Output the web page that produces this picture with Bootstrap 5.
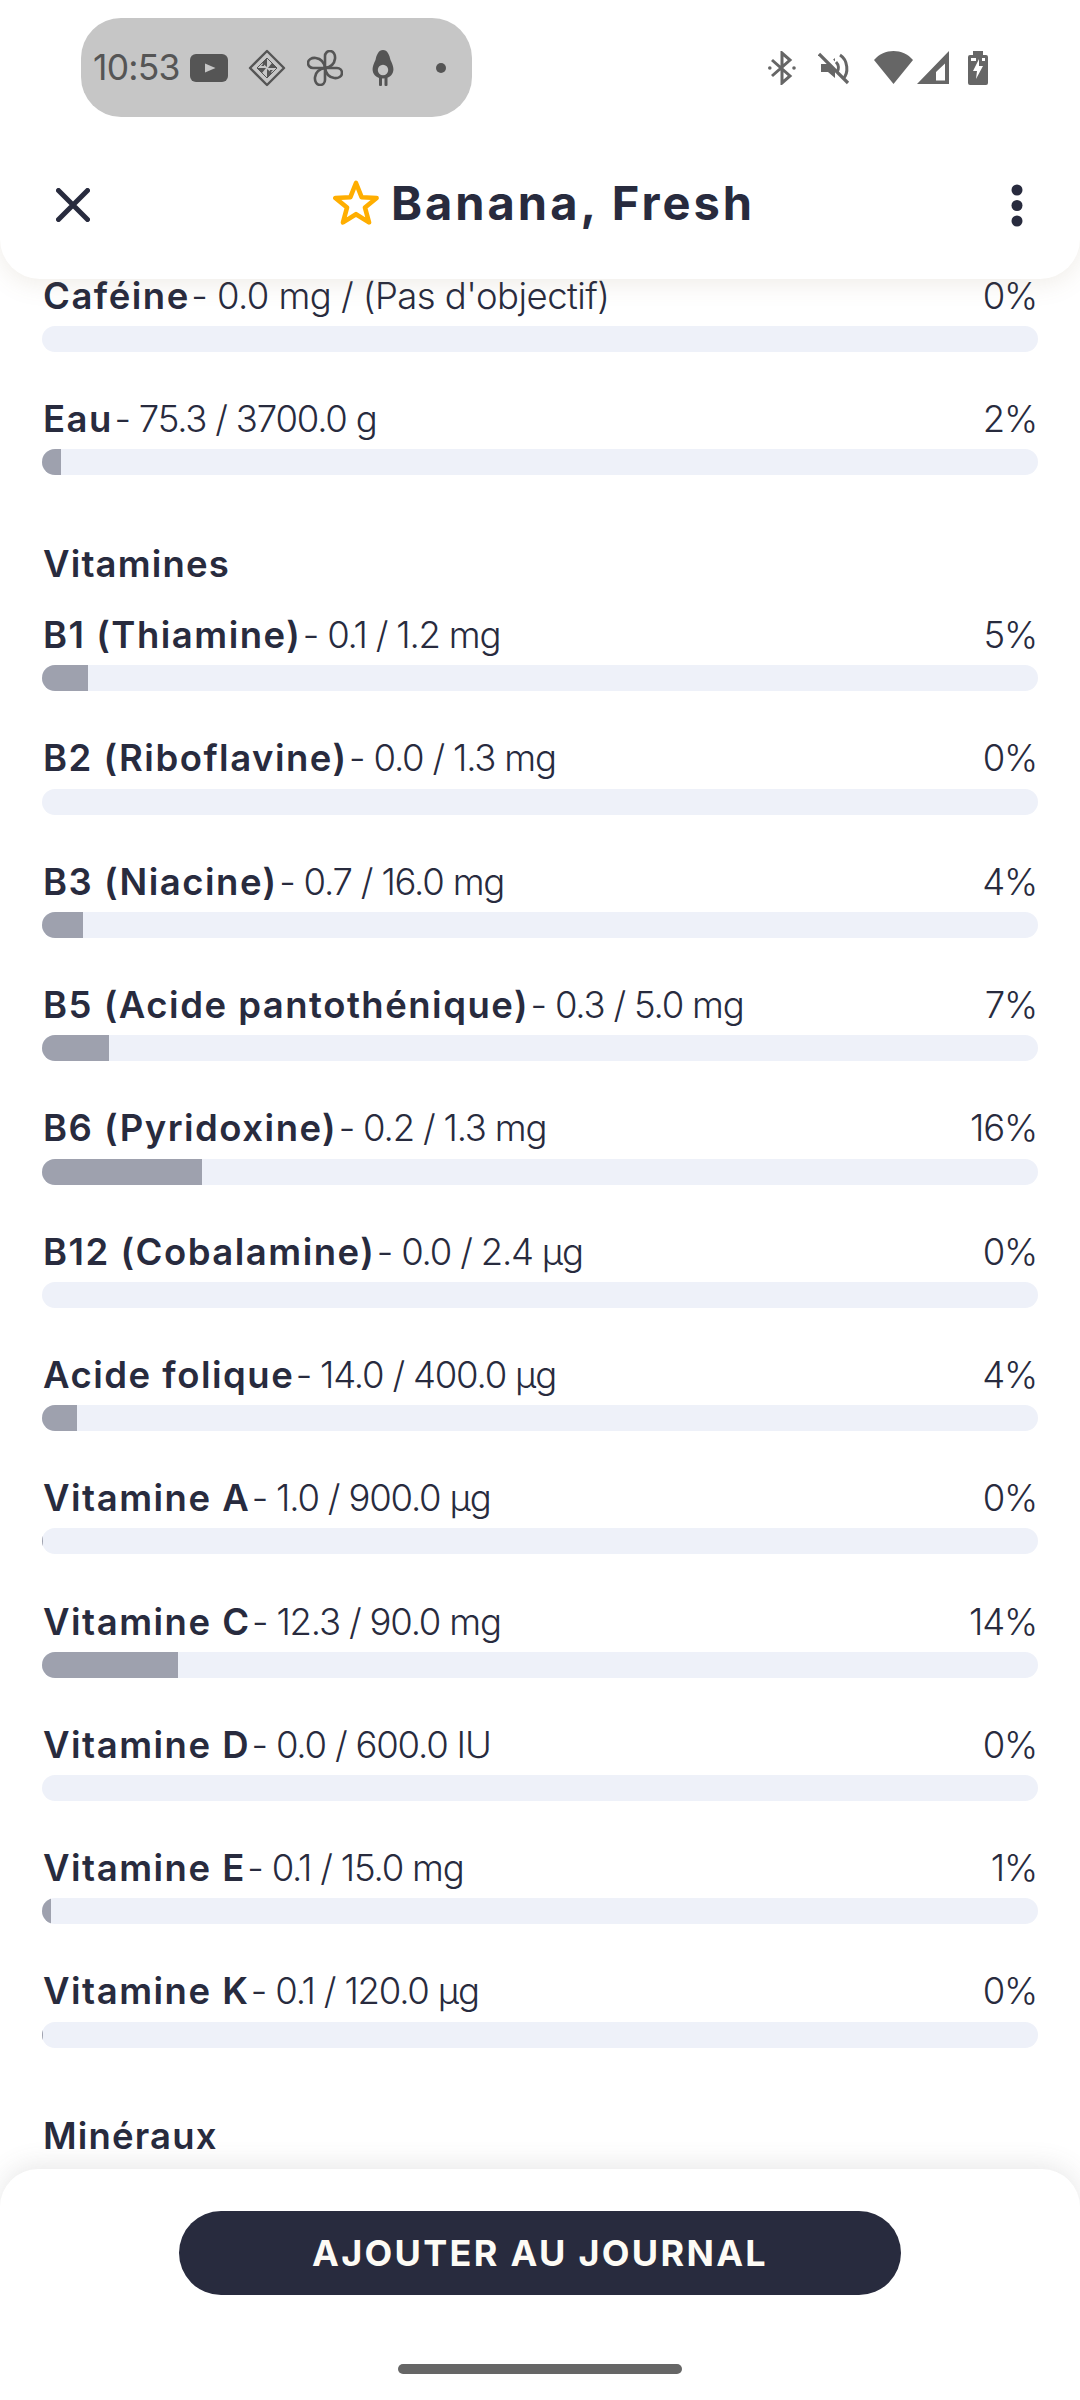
<!doctype html>
<html lang="fr">
<head>
<meta charset="utf-8">
<title>Banana, Fresh</title>
<link href="https://cdn.jsdelivr.net/npm/bootstrap@5.3.0/dist/css/bootstrap.min.css" rel="stylesheet">
<style>
html,body{height:2400px;margin:0;background:#fff;color:#282b3e;font-family:"Inter","Noto Sans",sans-serif;overflow:hidden}
.screen{height:2400px;width:1080px}
.top-sheet{height:279px;background:#fff;border-radius:0 0 40px 40px;box-shadow:0 4px 26px rgba(130,105,70,.13);position:relative;z-index:2;flex:none}
.status-row{height:99px;margin-top:18px;padding:0 92px 0 81px}
.status-pill{width:391px;height:99px;border-radius:40px;background:#c6c6c6;color:#555;padding-left:12px;font-size:35.5px;letter-spacing:-.8px;line-height:1}
.status-pill svg,.status-right svg{display:block;flex:none}
.ic-yt{margin-left:10px}
.ic-dia{margin-left:20px}
.ic-pin{margin-left:21px}
.ic-avo{margin-left:29px}
.ic-dot{margin-left:42px}
.ic-mute{margin-left:22px}
.ic-wifi{margin-left:24px}
.ic-sig{margin-left:4px}
.ic-bat{margin-left:19px}
.ic-star{margin-right:12px}
.title-row{padding:0 57px 0 56px;height:100px;margin-top:38px}
.title-group{margin:0 13px 6px 0}
.sheet-title{font-size:47px;font-weight:700;line-height:1;margin:0;letter-spacing:3px}
.scroll-area{flex:1 1 auto;overflow:hidden;padding:0 42px}
.scroll-inner{margin-top:-5.3px}
.sec-title{font-size:36.5px;font-weight:600;line-height:46px;margin:65.7px 0 26px 1px;letter-spacing:1.15px}
.nut-row{margin-bottom:45.03px}
.nut-line{font-size:36.5px;line-height:45px;font-weight:300;letter-spacing:-1.2px;padding-right:1px}
.nut-wide{letter-spacing:-.55px}
.nut-line b{font-weight:600;letter-spacing:1.5px;margin:0 1.5px 0 1px}
.nut-bar{height:26px;background:#eef1f9;border-radius:13px;margin-top:7.3px}
.nut-bar .progress-bar{background:#9ea1ae}
.bottom-sheet{height:231px;flex:none;background:#fff;border-radius:38px 38px 0 0;box-shadow:0 -4px 26px rgba(90,90,90,.14);position:relative;z-index:2;padding-top:42px}
.add-btn{width:722px;height:84px;background:#282b3e;color:#fdfbf5;font-size:36px;font-weight:700;letter-spacing:2.3px;border:0;line-height:1}
.home-bar{width:284px;height:10px;background:#666;border-radius:5px;margin-top:69px}
</style>
</head>
<body>
<div class="screen d-flex flex-column">
  <header class="top-sheet">
    <div class="status-row d-flex justify-content-between align-items-center">
      <div class="status-pill d-flex align-items-center">
        <span>10:53</span>
        <svg class="ic-yt" width="38" height="28" viewBox="0 0 38 28"><rect width="38" height="28" rx="6" fill="#555"/><path d="M15 9.5l10.5 4.5-10.5 4.5z" fill="#c6c6c6"/></svg>
        <svg class="ic-dia" width="38" height="38" viewBox="0 0 38 38" fill="none" stroke="#555"><path d="M19 2 36 19 19 36 2 19Z" stroke-width="2.4" stroke-linejoin="round"/><path d="M19 9 29 19 19 29 9 19Z" stroke-width="1"/><path d="M19 9 19 18 14 14ZM29 19 20 19 24 14ZM19 29 19 20 24 24ZM9 19 18 19 14 24ZM16 17h-3l3-3zM22 21h3l-3 3z" fill="#555" stroke="none"/></svg>
        <svg class="ic-pin" width="36" height="36" viewBox="0 0 36 36" fill="none" stroke="#555" stroke-width="2.6" stroke-linejoin="round"><path d="M18 18V6a5 5 0 0 1 5-5c7 0 8 15-5 17Z"/><path d="M18 18h12a5 5 0 0 1 5 5c0 7-15 8-17-5Z"/><path d="M18 18v12a5 5 0 0 1-5 5c-7 0-8-15 5-17Z"/><path d="M18 18H6a5 5 0 0 1-5-5c0-7 15-8 17 5Z"/></svg>
        <svg class="ic-avo" width="22" height="36" viewBox="0 0 22 36"><path fill="#555" d="M11 0c4.500 0 6.500 5 7.500 10 3 6 4.500 11 .5 15.500-2 2-4.500 3-8 3s-6-1-8-3C-1 21 .5 16 3.500 10 4.500 5 6.500 0 11 0Z"/><circle cx="11" cy="20" r="5.200" fill="#c6c6c6"/><rect x="7" y="27" width="3" height="9" rx="1" fill="#555"/><rect x="12.500" y="27" width="3" height="9" rx="1" fill="#555"/></svg>
        <svg class="ic-dot" width="10" height="10" viewBox="0 0 10 10"><circle cx="5" cy="5" r="5" fill="#555"/></svg>
      </div>
      <div class="status-right d-flex align-items-center">
        <svg width="28" height="34" viewBox="0 0 28 34" fill="none" stroke="#666" stroke-width="3"><path d="M4 9 22 25 14 32V2l8 7L4 25"/><circle cx="1.8" cy="17" r="1.8" fill="#666" stroke="none"/><circle cx="26" cy="17" r="1.8" fill="#666" stroke="none"/></svg>
        <svg class="ic-mute" width="32" height="34" viewBox="0 0 32 34" fill="none" stroke="#666"><path d="M3 13h7l7-6v20l-7-6H3z" fill="#666" stroke-width="0"/><path d="M4 1 33 30" stroke="#fff" stroke-width="5"/><path d="M1 3 30 32" stroke-width="3.200"/><path d="M22 4c8 5 9 18 3 24M18 11c3 3 3 7 1 10" stroke-width="3"/></svg>
        <svg class="ic-wifi" width="39" height="33" viewBox="0 0 39 33"><path fill="#666" d="M0 9C10-3 29-3 39 9L19.500 33Z"/></svg>
        <svg class="ic-sig" width="32" height="33" viewBox="0 0 32 33"><path fill="#666" fill-rule="evenodd" d="M32 0V33H0ZM28 12.500 19 21V29.500H28Z"/></svg>
        <svg class="ic-bat" width="20" height="34" viewBox="0 0 20 34"><path fill="#666" d="M5 0h10v4h3a2 2 0 0 1 2 2v26a2 2 0 0 1-2 2H2a2 2 0 0 1-2-2V6a2 2 0 0 1 2-2h3z"/><path fill="#fff" d="M11 8 5 20h4l-1 8 7-13h-4zM3 7h5v3H3zM14 7h3v3h-3z"/></svg>
      </div>
    </div>
    <div class="title-row d-flex justify-content-between align-items-center">
      <svg width="34" height="34" viewBox="0 0 34 34" fill="none" stroke="#282b3e" stroke-width="5" stroke-linecap="round"><path d="M2.500 2.500 31.500 31.500M31.500 2.500 2.500 31.500"/></svg>
      <div class="title-group d-flex align-items-center">
        <svg class="ic-star" width="46" height="45" viewBox="0 0 46 45" fill="none" stroke="#ffae00" stroke-width="4.600" stroke-linejoin="round"><path d="M23 3 28.600 17.200 43.600 18 32 27.600 36 42.400 23 34.200 10 42.400 14 27.600 2.400 18 17.400 17.200Z"/></svg>
        <h1 class="sheet-title">Banana, Fresh</h1>
      </div>
      <svg width="12" height="43" viewBox="0 0 12 43" fill="#282b3e"><circle cx="6" cy="6" r="5.500"/><circle cx="6" cy="21.500" r="5.500"/><circle cx="6" cy="37" r="5.500"/></svg>
    </div>
  </header>

  <main class="scroll-area">
    <div class="scroll-inner">
      <div class="nut-row">
        <div class="nut-line d-flex justify-content-between"><span class="nut-wide"><b>Caféine</b>- 0.0 mg / (Pas d'objectif)</span><span>0%</span></div>
        <div class="progress nut-bar"><div class="progress-bar" style="width:0%"></div></div>
      </div>
      <div class="nut-row">
        <div class="nut-line d-flex justify-content-between"><span><b>Eau</b>- 75.3 / 3700.0 g</span><span>2%</span></div>
        <div class="progress nut-bar"><div class="progress-bar" style="width:1.9%"></div></div>
      </div>
      <h2 class="sec-title">Vitamines</h2>
      <div class="nut-row">
        <div class="nut-line d-flex justify-content-between"><span><b>B1 (Thiamine)</b>- 0.1 / 1.2 mg</span><span>5%</span></div>
        <div class="progress nut-bar"><div class="progress-bar" style="width:4.6%"></div></div>
      </div>
      <div class="nut-row">
        <div class="nut-line d-flex justify-content-between"><span><b>B2 (Riboflavine)</b>- 0.0 / 1.3 mg</span><span>0%</span></div>
        <div class="progress nut-bar"><div class="progress-bar" style="width:0%"></div></div>
      </div>
      <div class="nut-row">
        <div class="nut-line d-flex justify-content-between"><span><b>B3 (Niacine)</b>- 0.7 / 16.0 mg</span><span>4%</span></div>
        <div class="progress nut-bar"><div class="progress-bar" style="width:4.1%"></div></div>
      </div>
      <div class="nut-row">
        <div class="nut-line d-flex justify-content-between"><span><b>B5 (Acide pantothénique)</b>- 0.3 / 5.0 mg</span><span>7%</span></div>
        <div class="progress nut-bar"><div class="progress-bar" style="width:6.7%"></div></div>
      </div>
      <div class="nut-row">
        <div class="nut-line d-flex justify-content-between"><span><b>B6 (Pyridoxine)</b>- 0.2 / 1.3 mg</span><span>16%</span></div>
        <div class="progress nut-bar"><div class="progress-bar" style="width:16.1%"></div></div>
      </div>
      <div class="nut-row">
        <div class="nut-line d-flex justify-content-between"><span><b>B12 (Cobalamine)</b>- 0.0 / 2.4 µg</span><span>0%</span></div>
        <div class="progress nut-bar"><div class="progress-bar" style="width:0%"></div></div>
      </div>
      <div class="nut-row">
        <div class="nut-line d-flex justify-content-between"><span><b>Acide folique</b>- 14.0 / 400.0 µg</span><span>4%</span></div>
        <div class="progress nut-bar"><div class="progress-bar" style="width:3.5%"></div></div>
      </div>
      <div class="nut-row">
        <div class="nut-line d-flex justify-content-between"><span><b>Vitamine A</b>- 1.0 / 900.0 µg</span><span>0%</span></div>
        <div class="progress nut-bar"><div class="progress-bar" style="width:.1%"></div></div>
      </div>
      <div class="nut-row">
        <div class="nut-line d-flex justify-content-between"><span><b>Vitamine C</b>- 12.3 / 90.0 mg</span><span>14%</span></div>
        <div class="progress nut-bar"><div class="progress-bar" style="width:13.7%"></div></div>
      </div>
      <div class="nut-row">
        <div class="nut-line d-flex justify-content-between"><span><b>Vitamine D</b>- 0.0 / 600.0 IU</span><span>0%</span></div>
        <div class="progress nut-bar"><div class="progress-bar" style="width:0%"></div></div>
      </div>
      <div class="nut-row">
        <div class="nut-line d-flex justify-content-between"><span><b>Vitamine E</b>- 0.1 / 15.0 mg</span><span>1%</span></div>
        <div class="progress nut-bar"><div class="progress-bar" style="width:.9%"></div></div>
      </div>
      <div class="nut-row">
        <div class="nut-line d-flex justify-content-between"><span><b>Vitamine K</b>- 0.1 / 120.0 µg</span><span>0%</span></div>
        <div class="progress nut-bar"><div class="progress-bar" style="width:.1%"></div></div>
      </div>
      <h2 class="sec-title">Minéraux</h2>
    </div>
  </main>

  <footer class="bottom-sheet d-flex flex-column align-items-center">
    <button type="button" class="btn rounded-pill add-btn">AJOUTER AU JOURNAL</button>
    <div class="home-bar"></div>
  </footer>
</div>
<script src="https://cdn.jsdelivr.net/npm/bootstrap@5.3.0/dist/js/bootstrap.bundle.min.js"></script>
</body>
</html>
